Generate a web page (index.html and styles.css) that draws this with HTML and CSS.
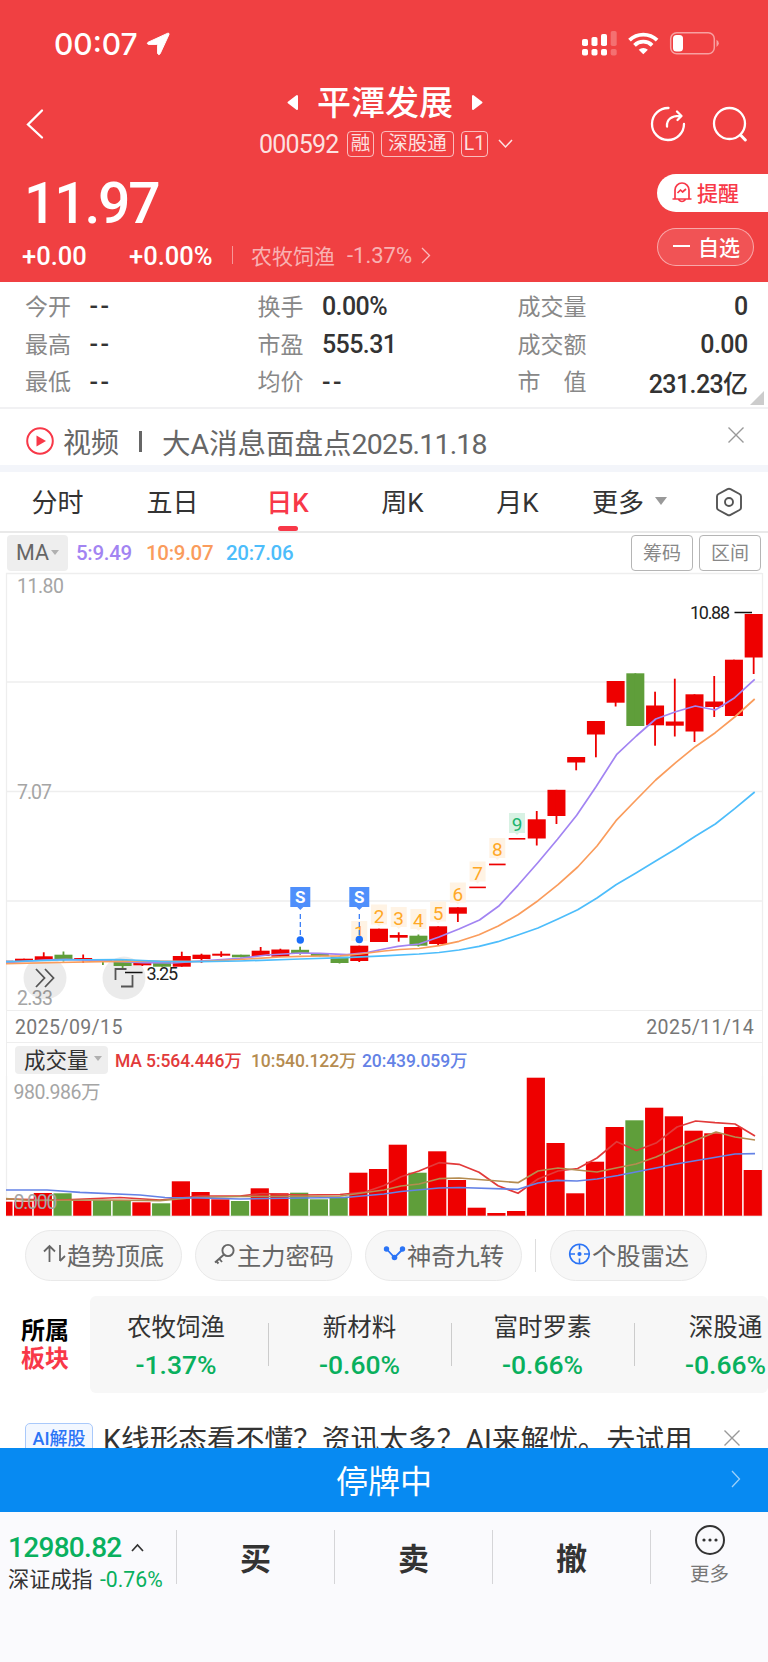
FILE: index.html
```html
<!DOCTYPE html>
<html lang="zh-CN">

<head>
  <meta charset="UTF-8">
  <meta name="viewport" content="width=device-width, initial-scale=1.0">
  <title>平潭发展 000592</title>
  <link rel="stylesheet" href="styles.css">
</head>

<body>
  <header class="header">
    <div class="status-bar">
      <span class="clock">00:07</span>
      <svg class="location" width="24" height="24" viewBox="0 0 24 24"><path d="M21.8 1.2 2 10.3q-1.6 1.4.4 2.1h8.4q.8 0 .8.8v8.4q1.2 2 2.5.2L23 2.5q.2-1.8-1.2-1.3z" fill="#fff" stroke="#fff" /></svg>
      <svg class="status-icons" width="140" height="26" viewBox="0 0 140 26">
        <g fill="#fff">
          <rect x="0" y="8" width="6" height="7" rx="1.8" /><rect x="9.5" y="6" width="6" height="9" rx="1.8" /><rect x="19" y="3" width="6" height="12" rx="1.8" />
          <rect x="0" y="18" width="6" height="6.5" rx="1.8" /><rect x="9.5" y="18" width="6" height="6.5" rx="1.8" /><rect x="19" y="18" width="6" height="6.5" rx="1.8" />
          <rect x="28.7" y="0" width="6" height="15" rx="1.8" opacity=".25" /><rect x="28.7" y="18" width="6" height="6.5" rx="1.8" opacity=".25" />
        </g>
        <g fill="none" stroke="#fff" stroke-width="3.8">
          <path d="M47.5 9.2a20 20 0 0 1 27.6 0" /><path d="M52.5 14.3a12.6 12.6 0 0 1 17.6 0" />
        </g>
        <path d="M56.7 18.7a7 7 0 0 1 9.2 0L61.3 23.2z" fill="#fff" />
        <rect x="88.7" y="1.7" width="43.6" height="21" rx="6" fill="none" stroke="#fff" stroke-opacity=".5" stroke-width="1.5" />
        <rect x="91" y="4" width="10" height="16.5" rx="3.5" fill="#fff" />
        <path d="M134.5 8.7q2.3 1 2.3 3.6t-2.3 3.6z" fill="#fff" opacity=".5" />
      </svg>
    </div>

    <div class="nav">
      <svg class="back" width="20" height="32" viewBox="0 0 20 32"><path d="M17 2.500 3 16.500l14 13" fill="none" stroke="#fff" stroke-width="2.3" stroke-linecap="round" /></svg>
      <div class="stock">
        <div class="stock-name">
          <svg width="12" height="18" viewBox="0 0 12 18"><path d="M10 2v13L1.500 8.500z" fill="#fff" stroke="#fff" stroke-width="2" stroke-linejoin="round" /></svg>
          <h1>平潭发展</h1>
          <svg width="12" height="18" viewBox="0 0 12 18"><path d="M2 2v13l8.500-6.500z" fill="#fff" stroke="#fff" stroke-width="2" stroke-linejoin="round" /></svg>
        </div>
        <div class="stock-sub">
          <span class="code">000592</span>
          <span class="tag">融</span>
          <span class="tag tag-wide">深股通</span>
          <span class="tag">L1</span>
          <svg width="15" height="10" viewBox="0 0 15 10"><path d="m1 1 6.500 7L14 1" fill="none" stroke="#fff" stroke-width="1.500" opacity=".85" /></svg>
        </div>
      </div>
      <div class="nav-actions">
        <svg width="36" height="36" viewBox="0 0 36 36" fill="none" stroke="#fff" stroke-width="2.300" stroke-linecap="round" stroke-linejoin="round"><path d="M18.500 2A16 16 0 1 0 34 18M17 20.500c-.5-7 4.500-11 14-10.500M27 5.500l4.500 4.500-4 4" /></svg>
        <svg width="36" height="36" viewBox="0 0 36 36" fill="none" stroke="#fff" stroke-width="2.300" stroke-linecap="round"><circle cx="17.500" cy="17.500" r="15.500" /><path d="m28.500 29 4.800 5" stroke-width="3" /></svg>
      </div>
    </div>

    <div class="price-row">
      <div>
        <div class="price">11.97</div>
        <div class="change">
          <span class="change-value">+0.00</span>
          <span class="change-rate">+0.00%</span>
          <i class="bar"></i>
          <span class="sector">农牧饲渔</span>
          <span class="sector-rate">-1.37%</span>
          <svg width="10" height="17" viewBox="0 0 10 17"><path d="m1 1 7.500 7.500L1 16" fill="none" stroke="#fff" stroke-width="1.300" opacity=".65" /></svg>
        </div>
      </div>
      <div class="price-actions">
        <button class="btn-alert">
          <svg width="20" height="22" viewBox="0 0 20 22" fill="none" stroke="#f83848" stroke-width="1.700" stroke-linejoin="round"><path d="M3 18V9a7 7 0 0 1 14 0v9M.5 18h19M6.500 18.500q3.500 4 7 0" /><path d="m5.500 12 3-3 2 2 3.500-3" /></svg>
          提醒
        </button>
        <button class="btn-watch"><i></i>自选</button>
      </div>
    </div>
  </header>

  <section class="quotes">
    <dl><dt>今开</dt><dd class="empty">--</dd><dt>最高</dt><dd class="empty">--</dd><dt>最低</dt><dd class="empty">--</dd></dl>
    <dl><dt>换手</dt><dd>0.00%</dd><dt>市盈</dt><dd>555.31</dd><dt>均价</dt><dd class="empty">--</dd></dl>
    <dl class="right"><dt>成交量</dt><dd>0</dd><dt>成交额</dt><dd>0.00</dd><dt>市　值</dt><dd>231.23亿</dd></dl>
    <i class="corner"></i>
  </section>

  <section class="video">
    <svg width="28" height="28" viewBox="0 0 28 28"><circle cx="14" cy="14" r="12.800" fill="none" stroke="#f83848" stroke-width="2" /><path d="M10.500 8.500v11l9.500-5.500z" fill="#f83848" /></svg>
    <span class="video-label">视频</span>
    <i class="bar"></i>
    <span class="video-title">大A消息面盘点<b>2025.11.18</b></span>
    <svg class="close" width="18" height="18" viewBox="0 0 18 18"><path d="m1.500 1.500 15 15m0-15-15 15" stroke="#999" stroke-width="1.400" /></svg>
  </section>

  <nav class="tabs">
    <span>分时</span>
    <span>五日</span>
    <span class="active">日K</span>
    <span>周K</span>
    <span>月K</span>
    <span class="tab-more">更多<i class="caret"></i></span>
    <svg width="28" height="30" viewBox="0 0 28 30" fill="none" stroke="#555" stroke-width="1.900" stroke-linejoin="round"><path d="M12.500 2.200q1.500-.8 3 0l9 4.800q1.500.8 1.500 2.500v11q0 1.700-1.500 2.500l-9 4.800q-1.500.8-3 0l-9-4.800Q2 22.200 2 20.500v-11Q2 7.800 3.500 7z" /><circle cx="14" cy="15" r="4" /></svg>
  </nav>

  <section class="ma-bar">
    <span class="picker">MA<i class="caret"></i></span>
    <span class="ma5">5:9.49</span>
    <span class="ma10">10:9.07</span>
    <span class="ma20">20:7.06</span>
    <button>筹码</button>
    <button>区间</button>
  </section>

  <section class="chart">
    <svg id="priceChart" width="768" height="438" viewBox="0 572 768 438"></svg>
    <div class="dates"><span>2025/09/15</span><span>2025/11/14</span></div>
    <div class="volume-head">
      <span class="picker">成交量<i class="caret"></i></span>
      <span class="vol5">MA 5:564.446万</span>
      <span class="vol10">10:540.122万</span>
      <span class="vol20">20:439.059万</span>
    </div>
    <svg id="volumeChart" width="768" height="141" viewBox="0 1076 768 141"></svg>
  </section>

  <section class="tools">
    <span class="chip">
      <svg width="24" height="20" viewBox="0 0 24 20" fill="none" stroke="#666" stroke-width="1.800"><path d="M6.500 18V2M1 7.500 6.500 2l5.500 5.500M17 1v16M22 12l-5 5" /></svg>趋势顶底
    </span>
    <span class="chip">
      <svg width="24" height="22" viewBox="0 0 24 22" fill="none" stroke="#666" stroke-width="1.900"><circle cx="15" cy="7.500" r="5.600" /><path d="m11 11.500-9 8M6 15.500l3 3.500M3 18l2.500 2.500" /></svg>主力密码
    </span>
    <span class="chip">
      <svg width="24" height="20" viewBox="0 0 24 20"><path d="m3.500 5 8 8.500 8-8" fill="none" stroke="#2b74f6" stroke-width="1.800" /><g fill="#2b74f6"><circle cx="3.500" cy="5" r="2.700" /><circle cx="11.500" cy="13.500" r="2.800" /><circle cx="19.500" cy="5" r="2.700" /></g></svg>神奇九转
    </span>
    <i class="bar"></i>
    <span class="chip">
      <svg width="24" height="22" viewBox="0 0 24 22" fill="none" stroke="#2b74f6" stroke-width="1.600"><circle cx="11.500" cy="11" r="9.800" /><path d="M11.500 1v5.500M11.500 15.500V21M1.500 11H7M16 11h5.500" /><circle cx="11.500" cy="11" r="1.300" fill="#2b74f6" /></svg>个股雷达
    </span>
  </section>

  <section class="sectors">
    <h2>所属<em>板块</em></h2>
    <div class="sector-list">
      <div><span>农牧饲渔</span><b>-1.37%</b></div>
      <div><span>新材料</span><b>-0.60%</b></div>
      <div><span>富时罗素</span><b>-0.66%</b></div>
      <div><span>深股通</span><b>-0.66%</b></div>
    </div>
  </section>

  <section class="ai">
    <span class="ai-tag">AI解股</span>
    <span class="ai-text">K线形态看不懂？资讯太多？AI来解忧。去试用</span>
    <svg class="close" width="18" height="18" viewBox="0 0 18 18"><path d="m1.500 1.500 15 15m0-15-15 15" stroke="#999" stroke-width="1.400" /></svg>
  </section>

  <div class="suspended">
    停牌中
    <svg width="10" height="18" viewBox="0 0 10 18"><path d="m1 1 7.500 8L1 17" fill="none" stroke="#fff" stroke-width="1.300" opacity=".6" /></svg>
  </div>

  <footer class="trade-bar">
    <div class="index">
      <div class="index-value">12980.82 <svg width="13" height="9" viewBox="0 0 13 9"><path d="m1 8 5.500-6L12 8" fill="none" stroke="#333" stroke-width="1.700" /></svg></div>
      <div class="index-name">深证成指 <b>-0.76%</b></div>
    </div>
    <div class="trade">买</div>
    <div class="trade">卖</div>
    <div class="trade">撤</div>
    <div class="more">
      <svg width="32" height="32" viewBox="0 0 32 32"><circle cx="16" cy="16" r="14" fill="none" stroke="#333" stroke-width="2" /><g fill="#333"><circle cx="10" cy="16" r="1.600" /><circle cx="16" cy="16" r="1.600" /><circle cx="22" cy="16" r="1.600" /></g></svg>
      更多
    </div>
  </footer>

  <script>
    const RED = '#ee0000';
    const GREEN = '#5f9e3a';
    const STEP = 19.72;
    const x = i => 4.3 + STEP * i;

    // [color, body top, body bottom, wick top, wick bottom]
    const candles = [
      ['r', 960.7, 962, 960.7, 962], ['r', 958.7, 961, 958.7, 961], ['r', 956.3, 960, 952.3, 960],
      ['g', 954.7, 959, 951.5, 961.5], ['r', 958, 959.3, 954.5, 963], ['g', 960, 961, 960, 965],
      ['g', 960.3, 966, 960.3, 968], ['r', 961.7, 965.3, 961.7, 966], ['g', 962, 966.7, 962, 966.7],
      ['r', 956, 966.7, 951.7, 966.7], ['r', 954.7, 959, 953.7, 963], ['r', 953.7, 955.7, 951.3, 957],
      ['g', 954.7, 957.3, 954.7, 957.3], ['r', 950.7, 956, 947, 956], ['r', 949.5, 956.7, 948.7, 956.7],
      ['g', 949.8, 953, 946.7, 954.7], ['g', 953.3, 956.3, 953.3, 956.3], ['g', 956.7, 963, 956.7, 963.5],
      ['r', 945.7, 961, 945.7, 962], ['r', 928.7, 942, 928.7, 942], ['r', 935, 937.7, 932.3, 941.7],
      ['g', 935.7, 945.7, 934.5, 946.5], ['r', 926.3, 944, 926.3, 945], ['r', 907.3, 913.7, 907.3, 922],
      ['r', 886.6, 888.2, 887, 888], ['r', 863.6, 865.3, 864, 865], ['r', 838, 839.6, 838, 839],
      ['r', 819.3, 838.5, 811, 845.5], ['r', 789.8, 816, 789.8, 824], ['r', 757, 762.5, 757, 770.3],
      ['r', 721, 734.5, 721, 757.3], ['r', 681, 702.7, 681, 706.5], ['g', 673.3, 726, 673.3, 726],
      ['r', 705.5, 725.3, 691.7, 745.7], ['r', 721.5, 725.7, 678.7, 736.5], ['r', 694.3, 731.5, 694.3, 742],
      ['r', 701.5, 707, 676, 717], ['r', 659.7, 716, 659.7, 716], ['r', 614, 657.5, 614, 674]
    ];

    // top edge of each volume bar
    const volumes = [1201.7, 1201.7, 1193, 1193.3, 1201, 1200.3, 1200.3, 1202.3, 1203.3, 1181.3, 1192, 1199.3, 1201,
      1188.3, 1193.3, 1192.7, 1199.3, 1196.7, 1172.7, 1169, 1144.7, 1172.7, 1151.3, 1180, 1207.7, 1213, 1211,
      1077.7, 1143, 1193.3, 1161.7, 1127, 1120.3, 1107.7, 1116.3, 1130.7, 1133.3, 1127, 1170];

    const ma5 = '6,962.7 24,961.5 44,960 66,959.3 100,960.7 143,962.7 173,963 207,960.7 240,958.3 267,955 300,953 320,953.3 347,954.7 367,952.7 384,949 398,946.3 419,944 439,937 459,929 479.500,920 498.500,906.3 518,885.3 538,862.5 557.500,839.3 576.700,815.3 596,786.7 616.500,754.7 636.300,736 655.700,719 675.700,711.7 695.300,706 715.300,710 734.700,697.7 754.700,679.3';
    const ma10 = '6,963.7 60,962.5 100,961.7 150,961.2 200,961.5 240,959.5 280,957 300,956.3 320,956 340,955.8 360,954 384,951 400,949.5 419,948.5 439,945.7 459,941.3 479,934.7 498.300,926 518,914.7 538,900.7 558,884.7 577.700,867 597,846 616,820.7 636,800 655.700,780 675.700,762.7 695.300,746.7 715.300,732.7 734.700,717 754.700,699';
    const ma20 = '6,961.7 60,960 120,959.5 160,961.3 200,961.7 240,961 300,959 345,957.7 384,955.8 419,954 439,952.5 459,950 479,946.3 498,941.7 518,935 538,928 558,919 577.700,909.7 597,898 616,884.7 636,873 655.700,861 675.700,849 695.300,836.3 715.300,824 734.700,808.7 754.700,792';
    const vol5 = '6,1199 60,1200 120,1197.5 160,1200 200,1196 240,1196 262,1193.5 300,1195 340,1194.5 365,1192 384,1185.5 401,1176.7 419,1171 439,1162.7 459,1164.3 479,1172.3 498,1185.7 518,1193.3 538,1179 558,1171 577.700,1168.5 597,1158 616.700,1141.7 636.500,1150.5 656.700,1142.7 677,1127 695.700,1121 715,1122.7 735,1124 755,1136';
    const vol10 = '6,1198.7 30,1200.5 100,1200 160,1200.7 195,1197.5 240,1196.5 340,1196 384,1190 401,1186 419,1184 439,1178.7 459,1178 498,1181 518,1182.7 538,1171 558,1168 577,1170 597,1172 616,1168 636,1164 656,1157 677,1147.7 716,1132 735,1137 755,1140';
    const vol20 = '6,1190 47,1190 80,1192.3 140,1195 165,1197.5 200,1198 240,1199 300,1198 345,1197.5 384,1194 401,1191.5 439,1188 459,1187.5 518,1189.3 538,1183 557,1180.3 577,1181 597,1179 618,1175.5 676,1164 735,1154 755,1153.7';

    const line = (points, color) => `<polyline points="${points}" fill="none" stroke="${color}" stroke-width="1.700" stroke-linejoin="round" />`;
    const label = (px, py, width, cls, text) => `<text x="${px}" y="${py}" textLength="${width}" class="${cls}">${text}</text>`;
    const rule = y => `<path d="M6 ${y}H762" stroke="#eee" stroke-width="1.300" />`;

    function drawCandle([c, top, bottom, high, low], i) {
      const color = c === 'r' ? RED : GREEN;
      const w = bottom - top < 1.8 && i > 20 ? 16.6 : 18;
      return `<rect x="${Math.max(6, x(i) - w / 2)}" y="${top}" width="${i ? w : 7.3}" height="${bottom - top}" fill="${color}" />
        <rect x="${x(i) - 0.9}" y="${high}" width="1.800" height="${low - high}" fill="${i ? color : 'none'}" />`;
    }

    // nine-turn counters above candles 18..26
    function drawCount(y, n) {
      const cx = x(18 + n);
      const last = n === 8;
      return `<path d="M${cx - 8} ${y}h16v20h-6l-2 2-2-2h-6z" fill="${last ? '#d8f2e4' : '#fff3e4'}" />
        <text x="${cx}" y="${y + 18}" text-anchor="middle" class="count ${last ? 'count-last' : ''}">${n + 1}</text>`;
    }

    function drawSell(cx, dotY) {
      return `<path d="M${cx - 10} 887h20v20h-7l-3 3-3-3h-7z" fill="#4f8ffb" />
        <text x="${cx}" y="903" text-anchor="middle" class="sell">S</text>
        <path d="M${cx} 914V${dotY}" stroke="#2b74f6" stroke-width="1.200" stroke-dasharray="5 3" />
        <circle cx="${cx}" cy="${dotY}" r="3.700" fill="#1c6ffa" />`;
    }

    document.getElementById('priceChart').innerHTML = `
      ${[573.5, 682, 791.5, 901].map(rule).join('')}
      <path d="M6.500 573V1010M762.500 573V1010" stroke="#eee" stroke-width="1.300" />
      ${label(17, 593, 47, 'axis', '11.80')}
      ${label(17, 799, 35, 'axis', '7.07')}
      ${label(17, 1005, 36, 'axis', '2.33')}
      <circle cx="45" cy="978" r="21.500" fill="#000" opacity=".08" />
      <circle cx="124" cy="978" r="21.500" fill="#000" opacity=".08" />
      <path d="m36 969 8.500 9-8.500 9m9-18 8.500 9-8.500 9M115.500 980v-11h11M121 986.500h11.500V975" fill="none" stroke="#555" stroke-width="1.800" />
      ${candles.map(drawCandle).join('')}
      ${[921, 904.5, 907, 909, 901.5, 882.5, 861.5, 838, 813].map(drawCount).join('')}
      ${line(ma5, '#a284f2')}
      ${line(ma10, '#fa9c5c')}
      ${line(ma20, '#4dbdfb')}
      ${drawSell(300.3, 940)}
      ${drawSell(359.3, 939.5)}
      <path d="M734.500 612.500H752M125 972.500h17.500" stroke="#111" stroke-width="1.700" />
      ${label(690, 619, 40, 'mark', '10.88')}
      ${label(146.5, 979.5, 31.5, 'mark', '3.25')}`;

    document.getElementById('volumeChart').innerHTML = `
      <path d="M6.500 1076V1216M762.500 1076V1216M6 1216H762" stroke="#eee" stroke-width="1.300" />
      ${volumes.map((top, i) => `<rect x="${i ? x(i) - 10 : 6}" y="${top}" width="${i ? 18.200 : 6.500}" height="${1215.7 - top}" fill="${candles[i][0] === 'r' ? RED : GREEN}" />`).join('')}
      ${line(vol5, '#e23a3a')}
      ${line(vol10, '#b58c50')}
      ${line(vol20, '#6482e6')}
      ${label(13.5, 1098.5, 87, 'axis', '980.986万')}
      ${label(13.5, 1209, 44, 'axis', '0.000')}`;
  </script>
</body>

</html>
```
FILE: styles.css
```css
* {
  box-sizing: border-box;
  margin: 0;
  padding: 0;
  font-family: Roboto, 'Noto Sans CJK SC', sans-serif;
}

body {
  width: 768px;
  height: 1662px;
  background: #fff;
  color: #333;
  overflow: hidden;
}

svg {
  display: block;
  flex: none;
}

button {
  border: none;
  background: none;
}

b,
em,
i {
  font-style: normal;
  font-weight: inherit;
}

.caret {
  border: 4px solid transparent;
  border-top: 5px solid #b0b0b0;
  border-bottom: 0;
}

/* header */
.header {
  height: 282px;
  background: #f04042;
  color: #fff;
}

.status-bar {
  display: flex;
  align-items: center;
  height: 86px;
  padding: 2px 48px 0 54px;
}

.clock {
  font-family: Inter, sans-serif;
  font-size: 30px;
  font-weight: 500;
}

.location {
  margin-left: 8px;
}

.status-icons {
  margin-left: auto;
  margin-right: -2px;
}

.nav {
  display: flex;
  align-items: flex-start;
  height: 75px;
  padding: 0 20px 0 25px;
}

.back {
  margin-top: 22px;
}

.stock {
  margin: 0 auto 0 214px;
}

.stock-name {
  display: flex;
  align-items: center;
  height: 34px;
  gap: 18px;
  padding-left: 28px;
}

.stock-name h1 {
  font-size: 34px;
  font-weight: 500;
  line-height: 34px;
}

.stock-sub {
  display: flex;
  align-items: center;
  height: 26px;
  margin-top: 11px;
  gap: 7px;
  color: rgba(255, 255, 255, 0.85);
}

.code {
  width: 81px;
  font-size: 25px;
  letter-spacing: -0.8px;
}

.tag {
  width: 27px;
  height: 26px;
  border: 1.5px solid rgba(255, 255, 255, 0.65);
  border-radius: 4px;
  font-size: 19.5px;
  line-height: 24px;
  text-align: center;
  white-space: nowrap;
}

.tag-wide {
  width: 73px;
}

.stock-sub svg {
  margin-left: 3px;
}

.nav-actions {
  display: flex;
  gap: 26px;
  margin-top: 20px;
}

.price-row {
  display: flex;
  justify-content: space-between;
  height: 121px;
  padding-left: 22px;
}

.price {
  height: 76px;
  padding: 9px 0 0 2px;
  font-size: 57px;
  font-weight: 500;
  line-height: 68px;
  letter-spacing: -2.2px;
}

.change {
  display: flex;
  align-items: center;
  height: 38px;
}

.change-value,
.change-rate {
  font-size: 25.5px;
  font-weight: 500;
}

.change-value {
  width: 107px;
}

.change-rate {
  width: 103px;
}

.change .bar {
  width: 1px;
  height: 18px;
  margin: 0 18px 2px 0;
  background: rgba(255, 255, 255, 0.45);
}

.sector,
.sector-rate {
  padding-bottom: 2px;
  color: rgba(255, 255, 255, 0.6);
  font-size: 21px;
}

.sector {
  width: 96px;
}

.sector-rate {
  width: 74px;
  font-size: 22px;
}

.change svg {
  margin-bottom: 2px;
}

.price-actions {
  display: flex;
  flex-direction: column;
  width: 111px;
  padding-top: 13px;
  gap: 16px;
}

.price-actions button {
  display: flex;
  align-items: center;
  height: 38px;
  padding: 0 0 2px 15px;
  font-size: 21px;
  font-weight: 500;
}

.btn-alert {
  gap: 5px;
  border-radius: 19px 0 0 19px;
  background: #fff;
  color: #f83848;
}

.btn-watch {
  width: 97px;
  gap: 8px;
  border: 1px solid rgba(255, 255, 255, 0.5);
  border-radius: 19px;
  background: rgba(255, 255, 255, 0.1);
  color: #fff;
}

.btn-watch i {
  width: 17px;
  height: 2px;
  background: #fff;
}

/* quotes */
.quotes {
  position: relative;
  display: flex;
  height: 127px;
  padding: 4px 21px 0 25px;
  border-bottom: 2px solid #f1f1f3;
}

.quotes dl {
  display: grid;
  grid-template-columns: 64.5px 168px;
  grid-template-rows: repeat(3, 37.7px);
  align-items: center;
}

.quotes dl.right {
  grid-template-columns: 100px 130px;
  margin-left: 27.5px;
}

.quotes dt {
  color: #888;
  font-size: 23px;
}

.quotes dd {
  padding-top: 4px;
  font-size: 25px;
  font-weight: 500;
  letter-spacing: -0.6px;
}

.quotes .empty {
  letter-spacing: 2.5px;
}

.right dd {
  text-align: right;
}

.corner {
  position: absolute;
  right: 4px;
  bottom: 2px;
  border-bottom: 14px solid #ccc;
  border-left: 14px solid transparent;
}

/* video strip */
.video {
  display: flex;
  align-items: center;
  height: 63px;
  padding: 8px 23px 0 26px;
  border-bottom: 7px solid #f3f5fa;
  color: #666;
  font-size: 28px;
}

.video-label {
  margin-left: 9px;
}

.video .bar {
  width: 3px;
  height: 21px;
  margin: 0 20px;
  background: #666;
}

.video-title {
  font-size: 28.5px;
}

.video-title b {
  letter-spacing: -0.8px;
}

.close {
  margin-left: auto;
}

.video .close {
  margin-bottom: 12px;
}

/* period tabs */
.tabs {
  display: flex;
  align-items: center;
  height: 61px;
  border-bottom: 2px solid #e9e9e9;
  font-size: 26px;
}

.tabs span {
  position: relative;
  display: flex;
  align-items: center;
  justify-content: center;
  width: 115px;
  height: 59px;
  padding-bottom: 2px;
}

.tabs .active {
  color: #f83848;
  font-weight: 500;
}

.tabs .active::after {
  content: '';
  position: absolute;
  left: 48px;
  bottom: 0;
  width: 20px;
  height: 5px;
  border-radius: 3px;
  background: #f83848;
}

.tabs .tab-more {
  padding-right: 6px;
}

.tabs .caret {
  margin-left: 11px;
  border-width: 8px 6.5px 0;
  border-top-color: #999;
}

.tabs svg {
  margin-left: 25px;
}

/* moving averages */
.ma-bar {
  display: flex;
  align-items: center;
  height: 39px;
  padding: 0 7px;
  font-size: 20.5px;
}

.picker {
  display: flex;
  align-items: center;
  border-radius: 4px;
  background: #eee;
}

.ma-bar .picker {
  width: 61px;
  height: 36px;
  padding-left: 9px;
  gap: 2px;
  margin-right: 8px;
  color: #666;
  font-size: 21.5px;
}

.ma5 {
  width: 70px;
  color: #a284f2;
}

.ma10 {
  width: 80px;
  color: #fa9c5c;
}

.ma20 {
  margin-right: auto;
  color: #4dbdfb;
}

.ma5,
.ma10,
.ma20 {
  font-weight: 500;
  letter-spacing: -0.3px;
}

.ma-bar button {
  width: 62px;
  height: 36px;
  margin-left: 6px;
  padding-bottom: 2px;
  border: 1px solid #b5b5b5;
  border-radius: 4px;
  color: #888;
  font-size: 19px;
}

/* charts */
.axis {
  fill: #a5a5a5;
  font-size: 19.5px;
}

.mark {
  fill: #222;
  font-size: 18px;
}

.count {
  fill: #ffa826;
  font-size: 19px;
}

.count-last {
  fill: #1eb46e;
}

.sell {
  fill: #fff;
  font-size: 17px;
  font-weight: 700;
}

.dates,
.volume-head {
  margin: 0 5px 0 6px;
  border: 1px solid #eee;
  border-width: 1px 1px 0;
}

.dates {
  display: flex;
  justify-content: space-between;
  align-items: center;
  height: 32px;
  padding: 2px 8px 0;
  color: #777;
  font-size: 19.5px;
  letter-spacing: 0.4px;
}

.volume-head {
  display: flex;
  align-items: center;
  height: 34px;
  padding-left: 8px;
  font-size: 17.5px;
  font-weight: 500;
}

.volume-head .picker {
  width: 93px;
  height: 28px;
  padding: 0 0 2px 9px;
  gap: 5px;
  font-size: 21.5px;
  font-weight: 400;
}

.vol5 {
  width: 136px;
  margin-left: 7px;
  color: #e23a3a;
  letter-spacing: -0.1px;
}

.vol10 {
  width: 111px;
  color: #b58c50;
  letter-spacing: -0.1px;
}

.vol20 {
  color: #6482e6;
  letter-spacing: -0.1px;
}

/* tool chips */
.tools {
  display: flex;
  align-items: center;
  height: 79px;
  padding: 0 0 3px 25px;
  gap: 13px;
}

.chip {
  display: flex;
  align-items: center;
  justify-content: center;
  width: 157px;
  height: 51px;
  padding-bottom: 2px;
  border: 1px solid #e9e9e9;
  border-radius: 26px;
  background: #f7f7f7;
  color: #666;
  font-size: 24.3px;
}

.tools .bar {
  width: 1px;
  height: 33px;
  margin-right: 1px;
  background: #ddd;
}

/* sectors */
.sectors {
  display: flex;
  align-items: center;
  height: 97px;
}

.sectors h2 {
  width: 90px;
  padding-left: 21px;
  color: #000;
  font-size: 24px;
  font-weight: 700;
  line-height: 28px;
}

.sectors em {
  display: block;
  color: #f83848;
}

.sector-list {
  display: flex;
  align-items: center;
  width: 678px;
  height: 97px;
  padding-top: 2px;
  border-radius: 6px;
  background: #f7f7f7;
  overflow: hidden;
}

.sector-list div {
  position: relative;
  display: flex;
  flex: none;
  flex-direction: column;
  align-items: center;
  width: 183px;
}

.sector-list div:first-child {
  width: 178px;
  padding-right: 6px;
}

.sector-list div + div::before {
  content: '';
  position: absolute;
  left: 0;
  top: 14px;
  width: 1px;
  height: 43px;
  background: #ccc;
}

.sector-list span {
  font-size: 24.5px;
  line-height: 37px;
}

.sector-list b {
  color: #09b05e;
  font-size: 26.5px;
  font-weight: 500;
  line-height: 37px;
}

/* ai hint, partly under the blue strip */
.ai {
  display: flex;
  align-items: flex-start;
  height: 55px;
  padding: 30px 27px 0 25px;
  overflow: hidden;
}

.ai-tag {
  width: 68px;
  height: 32px;
  border: 1.5px solid #a9c9fb;
  border-radius: 5px;
  background: #f2f7ff;
  color: #2b74f6;
  font-size: 18px;
  font-weight: 500;
  line-height: 29px;
  text-align: center;
}

.ai-text {
  margin-left: 10px;
  font-size: 28.7px;
  line-height: 34px;
  white-space: nowrap;
}

.ai .close {
  margin-top: 6px;
}

.suspended {
  display: flex;
  align-items: center;
  justify-content: flex-end;
  height: 64px;
  padding: 0 27px 2px 0;
  gap: 299px;
  background: #078af2;
  color: #fff;
  font-size: 32px;
}

/* bottom bar */
.trade-bar {
  display: flex;
  align-items: flex-start;
  height: 150px;
  padding-top: 18px;
  background: #fafafd;
}

.index {
  width: 176px;
  padding-left: 8px;
  white-space: nowrap;
}

.index-value {
  display: flex;
  align-items: center;
  height: 34px;
  gap: 9px;
  color: #09b05e;
  font-size: 28px;
  font-weight: 500;
  letter-spacing: -0.7px;
}

.index-name {
  font-size: 21.2px;
  line-height: 31px;
}

.index-name b {
  color: #09b05e;
  margin-left: 2px;
}

.trade,
.more {
  height: 54px;
  border-left: 1px solid #d5d5d8;
}

.trade {
  width: 158px;
  font-size: 31px;
  font-weight: 700;
  line-height: 59px;
  text-align: center;
}

.more {
  display: flex;
  flex: 1;
  flex-direction: column;
  align-items: center;
  color: #777;
  font-size: 19.5px;
  line-height: 37px;
}

.more svg {
  margin-top: -6px;
}
```
